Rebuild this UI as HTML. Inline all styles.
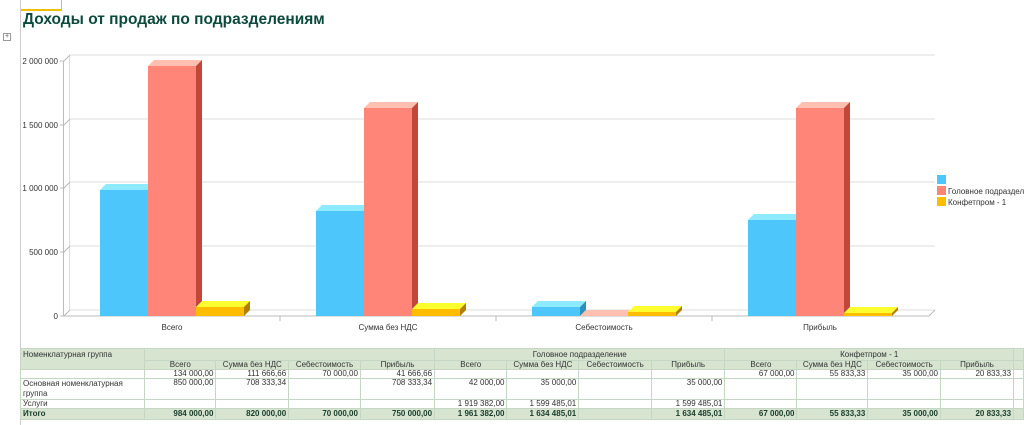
<!DOCTYPE html><html><head><meta charset="utf-8"><style>
body{margin:0;width:1024px;height:425px;overflow:hidden;background:#fff;font-family:"Liberation Sans",sans-serif;position:relative}
.t{position:absolute;left:23px;top:11px;font-size:15.5px;font-weight:bold;color:#0b4a3c}
table{position:absolute;left:20px;top:348px;border-collapse:collapse;font-size:8px;color:#333;table-layout:fixed}
td{border:1px solid #c6d6c4;padding:0 2px;height:8px;line-height:8px;white-space:nowrap;overflow:hidden}
.h td{background:#d6e4d0;text-align:center}
.n{text-align:right}
.tot td{background:#d6e4d0;font-weight:bold;color:#1a3d2b;text-align:right;height:10px}
</style></head><body>
<div style="position:absolute;left:20px;top:0;width:1px;height:425px;background:#ccc"></div>
<div style="position:absolute;left:21px;top:0;width:40px;height:9px;border-right:1px solid #e0c040;border-bottom:2px solid #f0c000"></div>
<div style="position:absolute;left:3px;top:33px;width:6px;height:6px;border:1px solid #999;font-size:7px;line-height:6px;text-align:center;color:#555">+</div>
<div class="t">Доходы от продаж по подразделениям</div>
<svg style="position:absolute;left:0;top:0" width="1024" height="345" font-family="Liberation Sans" font-size="8" fill="#333">
<g stroke="#ddd" stroke-width="1">
<line x1="69.5" y1="55" x2="935" y2="55"/><line x1="69.5" y1="119" x2="935" y2="119"/><line x1="69.5" y1="182" x2="935" y2="182"/><line x1="69.5" y1="246" x2="935" y2="246"/><line x1="69.5" y1="310" x2="935" y2="310"/>
<line x1="69.5" y1="55" x2="69.5" y2="310"/>
</g>
<g stroke="#bbb" fill="none"><line x1="63.5" y1="61" x2="63.5" y2="316"/><line x1="63.5" y1="316" x2="929" y2="316"/><line x1="929" y1="316" x2="935" y2="310"/>
<path d="M60 61h4l6-6M60 125h4l6-6M60 188h4l6-6M60 252h4l6-6M60 316h4l6-6"/>
<path d="M280 316v5M496 316v5M712 316v5"/></g>
<g text-anchor="end"><text x="58" y="64">2 000 000</text><text x="58" y="128">1 500 000</text><text x="58" y="191">1 000 000</text><text x="58" y="255">500 000</text><text x="58" y="319">0</text></g>
<g text-anchor="middle"><text x="172" y="330">Всего</text><text x="388" y="330">Сумма без НДС</text><text x="604" y="330">Себестоимость</text><text x="820" y="330">Прибыль</text></g>
<g>
<path d="M100 190h48v126h-48z" fill="#4cc6fb"/><path d="M100 190l6-6h48l-6 6z" fill="#8eeaff"/>
<path d="M148 66h48v250h-48z" fill="#fe8577"/><path d="M148 66l6-6h48l-6 6z" fill="#ffc0b2"/><path d="M196 66l6-6v250l-6 6z" fill="#c2463a"/>
<path d="M196 307h48v9h-48z" fill="#ffbd00"/><path d="M196 307l6-6h48l-6 6z" fill="#ffff30"/><path d="M244 307l6-6v9l-6 6z" fill="#b08000"/>
<path d="M316 211h48v105h-48z" fill="#4cc6fb"/><path d="M316 211l6-6h48l-6 6z" fill="#8eeaff"/>
<path d="M364 108h48v208h-48z" fill="#fe8577"/><path d="M364 108l6-6h48l-6 6z" fill="#ffc0b2"/><path d="M412 108l6-6v208l-6 6z" fill="#c2463a"/>
<path d="M412 309h48v7h-48z" fill="#ffbd00"/><path d="M412 309l6-6h48l-6 6z" fill="#ffff30"/><path d="M460 309l6-6v7l-6 6z" fill="#b08000"/>
<path d="M532 307h48v9h-48z" fill="#4cc6fb"/><path d="M532 307l6-6h48l-6 6z" fill="#8eeaff"/><path d="M580 307l6-6v9l-6 6z" fill="#2a90c0"/>
<path d="M580 316l6-6h48l-6 6z" fill="#ffc0b2"/>
<path d="M628 312h48v4h-48z" fill="#ffbd00"/><path d="M628 312l6-6h48l-6 6z" fill="#ffff30"/><path d="M676 312l6-6v4l-6 6z" fill="#b08000"/>
<path d="M748 220h48v96h-48z" fill="#4cc6fb"/><path d="M748 220l6-6h48l-6 6z" fill="#8eeaff"/>
<path d="M796 108h48v208h-48z" fill="#fe8577"/><path d="M796 108l6-6h48l-6 6z" fill="#ffc0b2"/><path d="M844 108l6-6v208l-6 6z" fill="#c2463a"/>
<path d="M844 313h48v3h-48z" fill="#ffbd00"/><path d="M844 313l6-6h48l-6 6z" fill="#ffff30"/><path d="M892 313l6-6v3l-6 6z" fill="#b08000"/>
</g>
<rect x="937" y="175" width="9" height="9" fill="#4cc6fb"/><rect x="937" y="186" width="9" height="9" fill="#fe8577"/><rect x="937" y="197" width="9" height="9" fill="#ffbd00"/>
<text x="948" y="194">Головное подразделение</text><text x="948" y="205">Конфетпром - 1</text>
</svg>
<table>
<colgroup><col style="width:125px"><col style="width:72px"><col style="width:73px"><col style="width:72px"><col style="width:75px"><col style="width:73px"><col style="width:72px"><col style="width:73px"><col style="width:74px"><col style="width:73px"><col style="width:71px"><col style="width:73px"><col style="width:74px"><col style="width:10px"></colgroup>
<tr class="h"><td style="text-align:left;vertical-align:top;padding-top:2px" rowspan="2">Номенклатурная группа</td><td colspan="4" style="height:11px"></td><td colspan="4">Головное подразделение</td><td colspan="4">Конфетпром - 1</td><td></td></tr>
<tr class="h"><td>Всего</td><td>Сумма без НДС</td><td>Себестоимость</td><td>Прибыль</td><td>Всего</td><td>Сумма без НДС</td><td>Себестоимость</td><td>Прибыль</td><td>Всего</td><td>Сумма без НДС</td><td>Себестоимость</td><td>Прибыль</td><td></td></tr>
<tr><td></td><td class="n">134 000,00</td><td class="n">111 666,66</td><td class="n">70 000,00</td><td class="n">41 666,66</td><td></td><td></td><td></td><td></td><td class="n">67 000,00</td><td class="n">55 833,33</td><td class="n">35 000,00</td><td class="n">20 833,33</td><td></td></tr>
<tr><td style="height:18px;line-height:10px;vertical-align:top;white-space:normal">Основная номенклатурная группа</td><td class="n" style="vertical-align:top">850 000,00</td><td class="n" style="vertical-align:top">708 333,34</td><td></td><td class="n" style="vertical-align:top">708 333,34</td><td class="n" style="vertical-align:top">42 000,00</td><td class="n" style="vertical-align:top">35 000,00</td><td></td><td class="n" style="vertical-align:top">35 000,00</td><td></td><td></td><td></td><td></td><td></td></tr>
<tr><td>Услуги</td><td></td><td></td><td></td><td></td><td class="n">1 919 382,00</td><td class="n">1 599 485,01</td><td></td><td class="n">1 599 485,01</td><td></td><td></td><td></td><td></td><td></td></tr>
<tr class="tot"><td style="text-align:left">Итого</td><td>984 000,00</td><td>820 000,00</td><td>70 000,00</td><td>750 000,00</td><td>1 961 382,00</td><td>1 634 485,01</td><td></td><td>1 634 485,01</td><td>67 000,00</td><td>55 833,33</td><td>35 000,00</td><td>20 833,33</td><td></td></tr>
</table>
</body></html>
